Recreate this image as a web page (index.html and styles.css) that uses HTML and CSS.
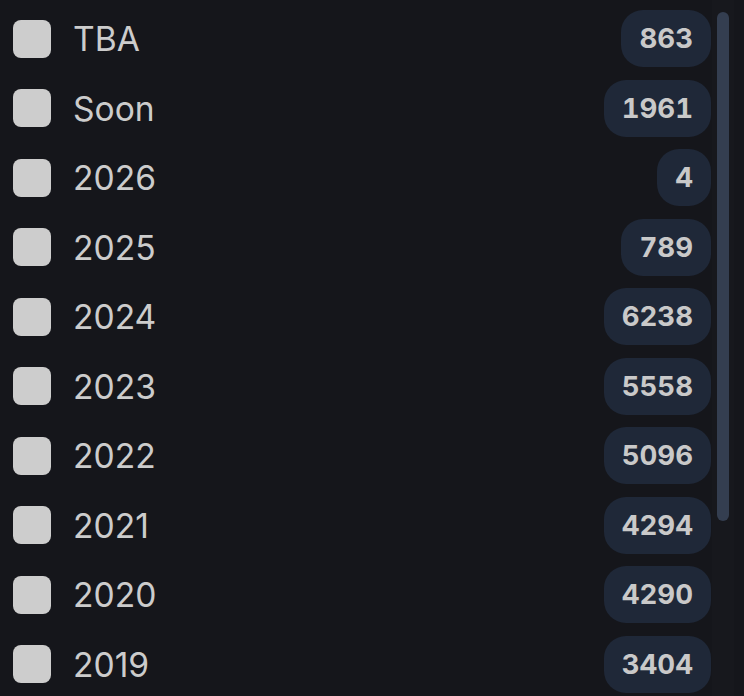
FILE: index.html
```html
<!DOCTYPE html>
<html lang="en">

<head>
    <meta charset="UTF-8">
    <meta name="viewport" content="width=device-width, initial-scale=1.0">
    <title>Release year filter</title>
    <link rel="stylesheet" href="styles.css">
</head>

<body>
    <div class="panel">
        <ul class="year-list">
            <li class="year-row"><span class="box"></span><span class="label">TBA</span><span class="count">863</span></li>
            <li class="year-row"><span class="box"></span><span class="label">Soon</span><span class="count">1961</span></li>
            <li class="year-row"><span class="box"></span><span class="label">2026</span><span class="count">4</span></li>
            <li class="year-row"><span class="box"></span><span class="label">2025</span><span class="count">789</span></li>
            <li class="year-row"><span class="box"></span><span class="label">2024</span><span class="count">6238</span></li>
            <li class="year-row"><span class="box"></span><span class="label">2023</span><span class="count">5558</span></li>
            <li class="year-row"><span class="box"></span><span class="label">2022</span><span class="count">5096</span></li>
            <li class="year-row"><span class="box"></span><span class="label">2021</span><span class="count">4294</span></li>
            <li class="year-row"><span class="box"></span><span class="label">2020</span><span class="count">4290</span></li>
            <li class="year-row"><span class="box"></span><span class="label">2019</span><span class="count">3404</span></li>
        </ul>
        <div class="scroll-track"></div>
        <div class="scroll-thumb"></div>
    </div>
</body>

</html>
```

FILE: styles.css
```css
body {
    margin: 0;
    padding: 0;
    background-color: #15161b;
    font-family: Inter, "Noto Sans", sans-serif;
    overflow: hidden;
}

.panel {
    position: relative;
    height: 696px;
    overflow: hidden;
}

.year-list {
    list-style: none;
    margin: 0;
    padding: 10px 33px 0 13px;
    display: flex;
    flex-direction: column;
    gap: 12.56px;
}

.year-row {
    display: flex;
    align-items: center;
    height: 57px;
}

.box {
    width: 38px;
    height: 38px;
    border-radius: 8px;
    background-color: #cdcdcd;
    flex-shrink: 0;
}

.label {
    margin-left: 22px;
    font-size: 33.6px;
    color: #cccccc;
    flex: 1;
}

.count {
    height: 57px;
    line-height: 57px;
    padding: 0 18px;
    border-radius: 22px;
    background-color: #1f2838;
    color: #c9c9c9;
    font-size: 27.6px;
    font-weight: 700;
    font-variant-numeric: tabular-nums;
}

.scroll-track {
    position: absolute;
    top: 0;
    left: 712px;
    width: 22px;
    height: 100%;
    background-color: #17181d;
}

.scroll-thumb {
    position: absolute;
    top: 12px;
    left: 717px;
    width: 12px;
    height: 509px;
    border-radius: 6px;
    background-color: #343e50;
}
```
